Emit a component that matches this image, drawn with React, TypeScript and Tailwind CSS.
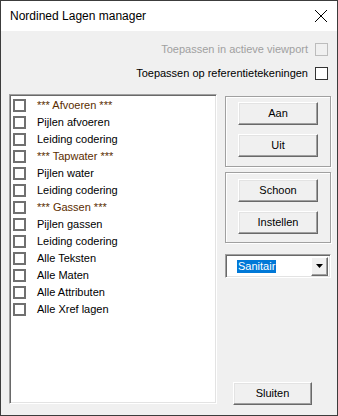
import React from "react";

const items: { label: string; heading?: boolean }[] = [
  { label: "*** Afvoeren ***", heading: true },
  { label: "Pijlen afvoeren" },
  { label: "Leiding codering" },
  { label: "*** Tapwater ***", heading: true },
  { label: "Pijlen water" },
  { label: "Leiding codering" },
  { label: "*** Gassen ***", heading: true },
  { label: "Pijlen gassen" },
  { label: "Leiding codering" },
  { label: "Alle Teksten" },
  { label: "Alle Maten" },
  { label: "Alle Attributen" },
  { label: "Alle Xref lagen" },
];

function Btn({ children, className = "" }: { children: React.ReactNode; className?: string }) {
  return (
    <div
      className={
        "flex items-center justify-center bg-[#f0f0f0] border border-t-white border-l-white border-r-[#696969] border-b-[#696969] shadow-[inset_-1px_-1px_0_#a0a0a0,inset_1px_1px_0_#e3e3e3] text-[11px] text-black " +
        className
      }
    >
      {children}
    </div>
  );
}

export default function App() {
  return (
    <div
      className="w-[338px] h-[416px] flex flex-col border border-[#3c3c3c] bg-[#f0f0f0] overflow-hidden"
      style={{ fontFamily: '"Liberation Sans", Arial, sans-serif' }}
    >
      <div className="h-[30px] bg-white flex items-center justify-between pl-[9px] pr-[8px] shrink-0">
        <span className="text-[12px] text-black">Nordined Lagen manager</span>
        <svg width="14" height="14" viewBox="0 0 14 14" className="mr-[1px]">
          <path d="M1 1 L13 13 M13 1 L1 13" stroke="#000" strokeWidth="1" fill="none" />
        </svg>
      </div>

      <div className="flex flex-col flex-1">
        <div className="mt-[12px] flex items-center justify-end pr-[9px] h-[13px]">
          <span className="text-[11px] text-[#a0a0a0] mr-[7px]">Toepassen in actieve viewport</span>
          <div className="w-[13px] h-[13px] border border-[#bcbcbc] bg-[#f0f0f0]" />
        </div>
        <div className="mt-[11px] flex items-center justify-end pr-[9px] h-[13px]">
          <span className="text-[11px] text-black mr-[7px]">Toepassen op referentietekeningen</span>
          <div className="w-[13px] h-[13px] border border-[#333333] bg-white" />
        </div>

        <div className="mt-[14px] flex">
          <div className="ml-[8px] w-[208px] h-[310px] bg-white border border-t-[#a0a0a0] border-l-[#a0a0a0] border-r-white border-b-white shadow-[inset_1px_1px_0_#696969,inset_-1px_-1px_0_#e3e3e3] pt-[2px] pl-[3px]">
            {items.map((it, i) => (
              <div key={i} className="h-[17px] flex items-center">
                <div className="w-[13px] h-[13px] border-2 border-[#707070] bg-white shrink-0" />
                <span
                  className={
                    "ml-[11px] text-[11px] whitespace-nowrap " +
                    (it.heading ? "text-[#5a2d00]" : "text-black")
                  }
                >
                  {it.label}
                </span>
              </div>
            ))}
          </div>

          <div className="ml-[8px] w-[106px] h-[311px] flex flex-col">
            <div className="mt-[2px] h-[71px] border border-[#a0a0a0] shadow-[inset_1px_1px_0_#ffffff,1px_1px_0_#ffffff] flex flex-col items-start pl-[12px] pt-[5px]">
              <Btn className="w-[80px] h-[23px]">Aan</Btn>
              <Btn className="w-[80px] h-[23px] mt-[9px]">Uit</Btn>
            </div>
            <div className="mt-[5px] h-[71px] border border-[#a0a0a0] shadow-[inset_1px_1px_0_#ffffff,1px_1px_0_#ffffff] flex flex-col items-start pl-[12px] pt-[6px]">
              <Btn className="w-[80px] h-[23px]">Schoon</Btn>
              <Btn className="w-[80px] h-[23px] mt-[9px]">Instellen</Btn>
            </div>
            <div className="mt-[11px] h-[24px] bg-white border border-t-[#a0a0a0] border-l-[#a0a0a0] border-r-white border-b-white shadow-[inset_1px_1px_0_#696969,inset_-1px_-1px_0_#e3e3e3] flex items-center pl-[11px] pr-[2px]">
              <span className="bg-[#0078d7] text-white text-[11px] leading-[13px] px-[1px]">Sanitair</span>
              <div className="ml-auto w-[17px] h-[19px] bg-[#f0f0f0] border border-t-white border-l-white border-r-[#696969] border-b-[#696969] shadow-[inset_-1px_-1px_0_#a0a0a0] flex items-center justify-center">
                <svg width="7" height="4" viewBox="0 0 7 4">
                  <path d="M0 0 H7 L3.5 4 Z" fill="#000" />
                </svg>
              </div>
            </div>
            <Btn className="mt-auto ml-[8px] w-[79px] h-[23px]">Sluiten</Btn>
          </div>
        </div>
      </div>
    </div>
  );
}
